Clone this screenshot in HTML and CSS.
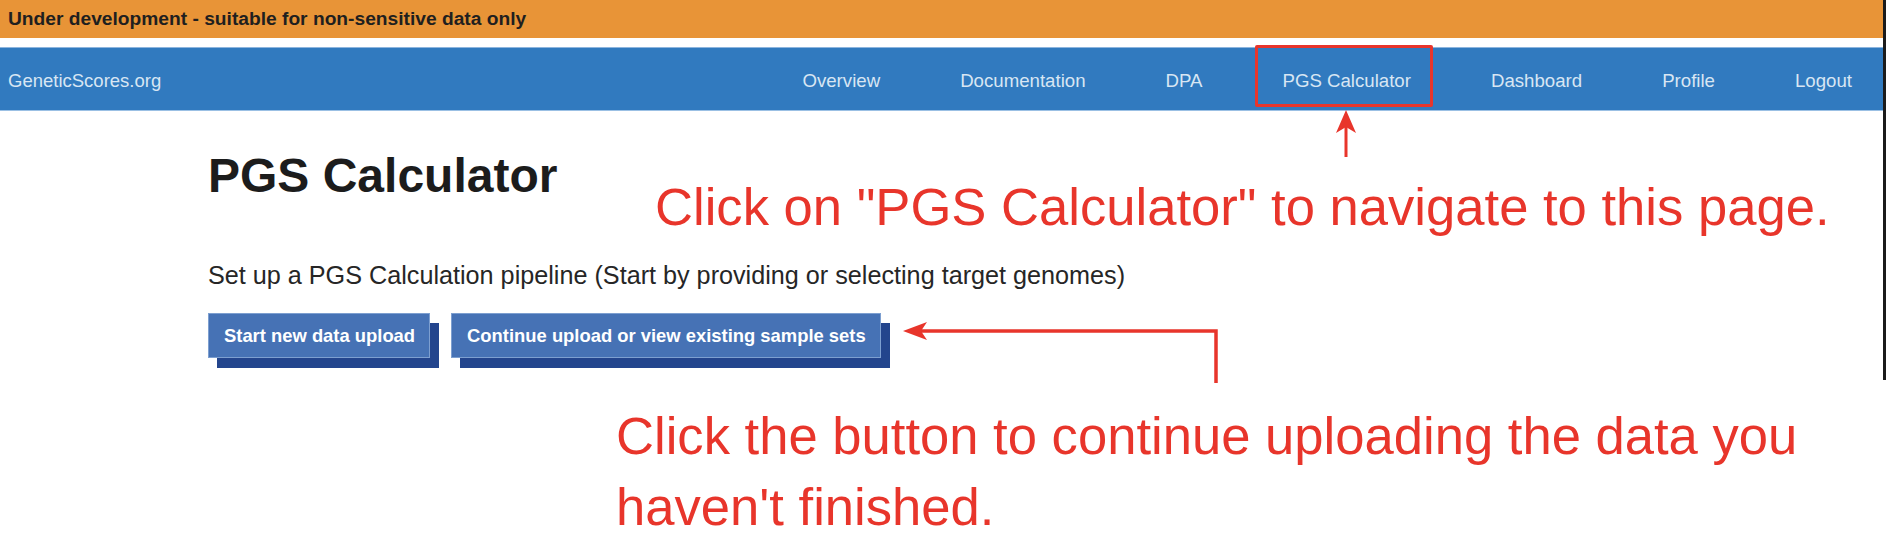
FILE: index.html
```html
<!DOCTYPE html>
<html lang="en">
<head>
<meta charset="utf-8">
<title>PGS Calculator</title>
<link rel="stylesheet" href="styles.css">
</head>
<body>
<div class="frame">
  <div class="page">
    <div class="banner">Under development - suitable for non-sensitive data only</div>
    <nav class="navbar">
      <a class="brand" href="#">GeneticScores.org</a>
      <ul class="nav-links">
        <li><a href="#">Overview</a></li>
        <li><a href="#">Documentation</a></li>
        <li><a href="#">DPA</a></li>
        <li><a href="#">PGS Calculator</a></li>
        <li><a href="#">Dashboard</a></li>
        <li><a href="#">Profile</a></li>
        <li><a href="#">Logout</a></li>
      </ul>
    </nav>
    <main class="content">
      <h1 class="title">PGS Calculator</h1>
      <p class="lead">Set up a PGS Calculation pipeline (Start by providing or selecting target genomes)</p>
      <div class="actions">
        <button class="btn" type="button">Start new data upload</button>
        <button class="btn" type="button">Continue upload or view existing sample sets</button>
      </div>
    </main>

    <div class="hl-box"></div>
    <svg class="arrow arrow-up" width="32" height="56" viewBox="0 0 32 56">
      <line x1="16" y1="18" x2="16" y2="51" stroke="#e8352b" stroke-width="3"/>
      <polygon points="16,4 6,27 16,21 26,27" fill="#e8352b"/>
    </svg>
    <p class="note note-1">Click on "PGS Calculator" to navigate to this page.</p>
    <svg class="arrow arrow-left" width="325" height="70" viewBox="0 0 325 70">
      <polyline points="20,13 318,13 318,65" fill="none" stroke="#e8352b" stroke-width="3.5"/>
      <polygon points="5,13 29,4 23,13 29,22" fill="#e8352b"/>
    </svg>
    <p class="note note-2">Click the button to continue uploading the data you haven't finished.</p>
  </div>
  <div class="edge"></div>
</div>
</body>
</html>
```

FILE: styles.css
```css
* { box-sizing: border-box; }

html, body {
  margin: 0;
  padding: 0;
  background: #ffffff;
}

body {
  font-family: "Liberation Sans", Arial, sans-serif;
  color: #222222;
}

.frame {
  display: flex;
  align-items: flex-start;
  width: 1886px;
}

.page {
  position: relative;
  flex: 1;
  height: 542px;
}

.edge {
  width: 3px;
  height: 380px;
  background: #1b1b1b;
}

.banner {
  height: 38px;
  line-height: 38px;
  padding-left: 8px;
  background: #e89437;
  color: #1f1f1f;
  font-weight: bold;
  font-size: 19.2px;
  margin-bottom: 9px;
}

.navbar {
  display: flex;
  align-items: center;
  height: 64px;
  background: #317abf;
  border-top: 1px solid #8db5de;
  border-bottom: 1px solid #9bc0e4;
  padding: 3px 31px 0 8px;
}

.brand {
  color: #d8e6f3;
  text-decoration: none;
  font-size: 18.5px;
}

.nav-links {
  display: flex;
  gap: 80px;
  list-style: none;
  margin: 0 0 0 auto;
  padding: 0;
}

.nav-links a {
  color: #d8e6f3;
  text-decoration: none;
  font-size: 18.65px;
}

.content {
  padding-left: 208px;
}

.title {
  margin: 36px 0 0;
  font-size: 48px;
  line-height: 1.2;
  font-weight: bold;
  color: #1c1c1c;
}

.lead {
  margin: 52px 0 0;
  font-size: 25.2px;
  line-height: 1.5;
  color: #262626;
}

.actions {
  display: flex;
  gap: 21px;
  margin-top: 19px;
}

.btn {
  font-family: "Liberation Sans", Arial, sans-serif;
  font-weight: bold;
  font-size: 18.4px;
  line-height: 23px;
  padding: 10px 14px 10px 15px;
  color: #ffffff;
  background: #4672b5;
  border: 1px solid #7d9fd0;
  border-radius: 0;
  box-shadow: 9px 10px 0 #23458d;
}

.hl-box {
  position: absolute;
  left: 1255px;
  top: 45px;
  width: 178px;
  height: 62px;
  border: 3px solid #e8352b;
  border-radius: 2px;
}

.arrow {
  position: absolute;
}

.arrow-up {
  left: 1330px;
  top: 106px;
}

.arrow-left {
  left: 898px;
  top: 318px;
}

.note {
  position: absolute;
  margin: 0;
  color: #e8352b;
  font-family: "Liberation Sans", Arial, sans-serif;
  font-size: 52.6px;
}

.note-1 {
  left: 655px;
  top: 181px;
  line-height: 1;
  white-space: nowrap;
}

.note-2 {
  left: 616px;
  top: 400px;
  width: 1220px;
  line-height: 71px;
}
```
